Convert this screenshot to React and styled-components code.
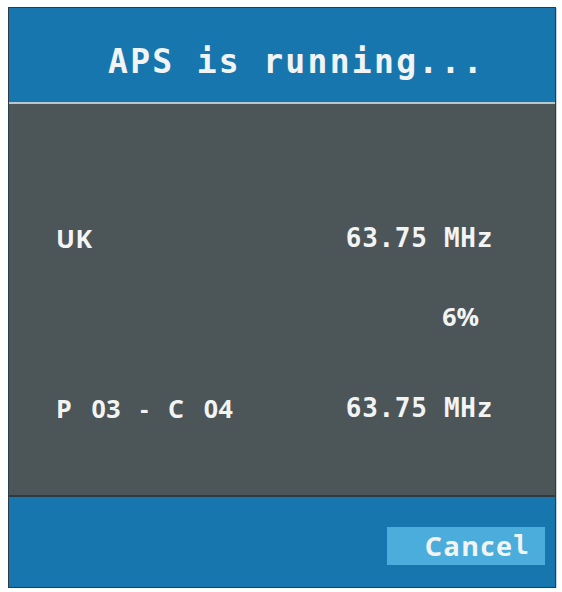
import React from "react";
import styled, { createGlobalStyle } from "styled-components";

const blue = "#1876af";
const gray = "#4c5558";
const ink = "#f2f4f4";
const mono = `"DejaVu Sans Mono", "Liberation Mono", monospace`;
const sans = `"Open Sans", "DejaVu Sans", sans-serif`;

const Global = createGlobalStyle`
	html, body{
		margin:0;
		background:#fdfefe;
	}
	body{
		padding:7px 6px 0 8px;
	}
`;

const Dialog = styled.div`
	width:548px;
	display:flex;
	flex-direction:column;
	border:1px solid #2c3c48;
	box-sizing:border-box;
	box-shadow:1px 1px 0 #c9d2d6;
`;

const Header = styled.header`
	height:96px;
	background:${blue};
	display:flex;
	align-items:center;
	padding-left:99px;
	padding-top:12px;
	box-sizing:border-box;
	border-bottom:2px solid #b9c8cf;
	color:${ink};
	font-family:${mono};
	font-weight:bold;
	font-size:33px;
	letter-spacing:2.3px;
`;

const Body = styled.section`
	height:393px;
	background:${gray};
	border-bottom:2px solid #2d3a40;
	box-sizing:border-box;
	padding:119px 62px 0 47px;
	display:flex;
	flex-direction:column;
`;

const Row = styled.div`
	display:flex;
	justify-content:space-between;
	align-items:center;
	height:30px;
	margin-top:${p => p.$gap || 0}px;
	padding-right:${p => p.$inset || 0}px;
	color:${ink};
`;

const Label = styled.span`
	font-family:${sans};
	font-weight:700;
	font-size:25px;
	letter-spacing:0.6px;
	word-spacing:12px;
`;

const Value = styled.span`
	font-family:${mono};
	font-weight:bold;
	font-size:26px;
	letter-spacing:0.7px;
`;

const Percent = styled.span`
	margin-left:auto;
	font-family:${sans};
	font-weight:700;
	font-size:25px;
`;

const Footer = styled.footer`
	height:90px;
	background:${blue};
	display:flex;
	justify-content:flex-end;
	align-items:flex-start;
	padding:30px 10px 0 0;
	box-sizing:border-box;
`;

const Button = styled.button`
	width:158px;
	height:38px;
	border:none;
	background:#4aaddb;
	color:${ink};
	font-family:${sans};
	font-weight:700;
	font-size:27px;
	letter-spacing:1.5px;
	display:flex;
	align-items:center;
	justify-content:flex-end;
	padding:0 16px 2px 0;
	cursor:pointer;

	span{
		font-family:${mono};
		font-weight:bold;
		font-size:26px;
		letter-spacing:0;
	}
`;

const App = () => {
	return (
		<>
			<Global />
			<Dialog>
				<Header>APS is running...</Header>
				<Body>
					<Row>
						<Label>UK</Label>
						<Value>63.75 MHz</Value>
					</Row>
					<Row $gap={48} $inset={14}>
						<Percent>6%</Percent>
					</Row>
					<Row $gap={62}>
						<Label>P 03 - C 04</Label>
						<Value>63.75 MHz</Value>
					</Row>
				</Body>
				<Footer>
					<Button>Cance<span>l</span></Button>
				</Footer>
			</Dialog>
		</>
	);
};

export default App;
